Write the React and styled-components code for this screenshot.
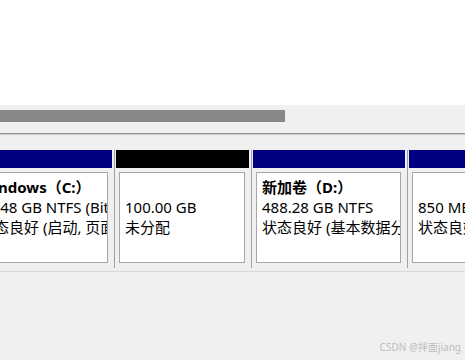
import styled, { createGlobalStyle } from "styled-components"

const GlobalStyle = createGlobalStyle`
  html, body {
    margin: 0;
    padding: 0;
    background: #f0f0f0;
    overflow: hidden;
  }
`

const Page = styled.div`
  position: relative;
  width: 465px;
  height: 360px;
  overflow: hidden;
  background: #f0f0f0;
  font-family: "Noto Sans", "Noto Sans CJK SC", sans-serif;
  color: #000;
`

const ListPane = styled.div`
  height: 105px;
  background: #ffffff;
`

const ScrollTrack = styled.div`
  height: 22px;
  padding-top: 5px;
  box-sizing: border-box;
  background: #f0f0f0;
`

const ScrollThumb = styled.div`
  width: 285px;
  height: 12px;
  background: #878787;
`

const Splitter = styled.div`
  height: 23px;
  padding-top: 6px;
  box-sizing: border-box;
`

const SplitLine = styled.div`
  height: 1px;
  background: #8f8f8f;
  border-bottom: 1px solid #cfcfcf;
`

const DiskRow = styled.div`
  display: flex;
  margin-left: -31px;
  height: 118px;
`

const Partition = styled.div`
  flex: 0 0 auto;
  width: ${(p) => p.$width}px;
  padding: 0 2px 0 1px;
  border-right: 1px solid #a0a0a0;
  display: flex;
  flex-direction: column;
`

const Header = styled.div`
  height: 18px;
  background: ${(p) => p.$color};
`

const Body = styled.div`
  flex: 1;
  padding: 4px 4px 5px 3px;
  min-height: 0;
`

const Box = styled.div`
  height: 100%;
  box-sizing: border-box;
  background: #ffffff;
  border: 1px solid #a6a6a6;
  padding: 4px 6px 0 5px;
  overflow: hidden;
  white-space: nowrap;
`

const Line = styled.div`
  font-size: 15px;
  line-height: 20px;
  height: 20px;
  font-weight: ${(p) => (p.$bold ? 700 : 400)};
`

const BottomRule = styled.div`
  margin-top: 3px;
  height: 1px;
  background: #d6d6d6;
`

const Watermark = styled.div`
  position: absolute;
  right: 4px;
  bottom: 7px;
  font-size: 10px;
  line-height: 12px;
  color: #bdbdbd;
  font-family: "Noto Sans", "Noto Sans CJK SC", sans-serif;
`

const partitions = [
  {
    width: 142,
    color: "#000080",
    lines: ["Windows（C:）", "99.48 GB NTFS (BitLocker 已加密)", "状态良好 (启动, 页面文件, 故障转储, 基本数据分区)"],
  },
  {
    width: 133,
    color: "#000000",
    lines: ["", "100.00 GB", "未分配"],
  },
  {
    width: 152,
    color: "#000080",
    lines: ["新加卷（D:）", "488.28 GB NTFS", "状态良好 (基本数据分区)"],
  },
  {
    width: 120,
    color: "#000080",
    lines: ["", "850 MB", "状态良好 (恢复分区)"],
  },
]

export default function App() {
  return (
    <Page>
      <GlobalStyle />
      <ListPane />
      <ScrollTrack>
        <ScrollThumb />
      </ScrollTrack>
      <Splitter>
        <SplitLine />
      </Splitter>

      <DiskRow>
        {partitions.map((p, i) => (
          <Partition key={i} $width={p.width}>
            <Header $color={p.color} />
            <Body>
              <Box>
                <Line $bold>{p.lines[0] || "\u00a0"}</Line>
                <Line>{p.lines[1]}</Line>
                <Line>{p.lines[2]}</Line>
              </Box>
            </Body>
          </Partition>
        ))}
      </DiskRow>
      <BottomRule />

      <Watermark>CSDN @拌面jiang</Watermark>
    </Page>
  )
}
